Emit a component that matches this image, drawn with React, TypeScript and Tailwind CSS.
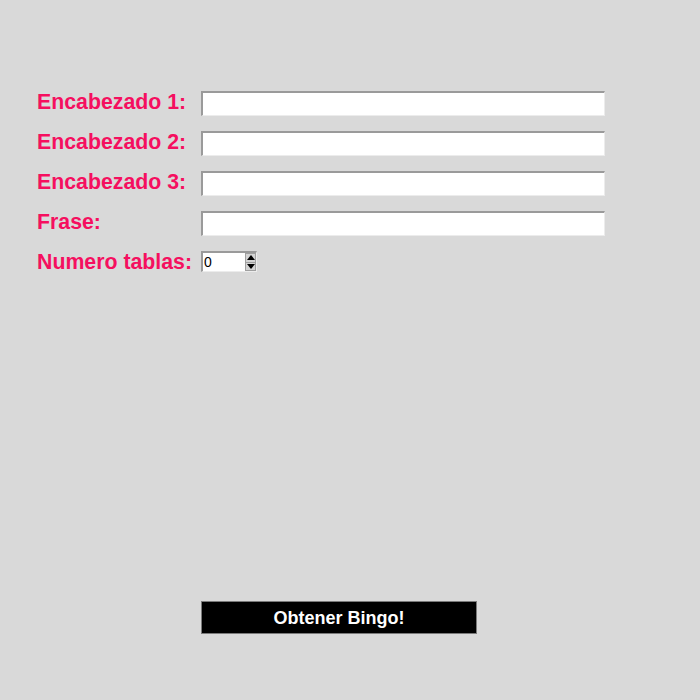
import React, { useState } from 'react'

const fields = ['Encabezado 1:', 'Encabezado 2:', 'Encabezado 3:', 'Frase:']

const TextRow = ({ label }: { label: string }) => (
  <div className="flex h-[40px] items-start">
    <label className="w-[164px] text-[21.3px] leading-[24px] font-bold text-[#f50f5f] mt-[-1px] whitespace-nowrap">
      {label}
    </label>
    <input
      type="text"
      className="h-[25px] w-[404px] bg-white border-t-2 border-l-2 border-b border-r border-t-[#9a9a9a] border-l-[#9a9a9a] border-b-[#ececec] border-r-[#ececec] outline-none px-1 text-[13px]"
    />
  </div>
)

export default function App() {
  const [tablas, setTablas] = useState(0)

  return (
    <div
      className="min-h-[700px] w-full bg-[#d9d9d9] pt-[91px] pl-[37px]"
      style={{ fontFamily: '"Liberation Sans", Arial, sans-serif' }}
    >
      {fields.map((f) => (
        <TextRow key={f} label={f} />
      ))}
      <div className="flex h-[40px] items-start">
        <label className="w-[164px] text-[21.3px] leading-[24px] font-bold text-[#f50f5f] mt-[-1px] whitespace-nowrap">
          Numero tablas:
        </label>
        <div className="flex h-[21px] w-[56px] bg-white border-t-2 border-l-2 border-t-[#9a9a9a] border-l-[#9a9a9a] border-b border-r border-b-[#ececec] border-r-[#ececec]">
          <input
            value={tablas}
            onChange={(e) => setTablas(Number(e.target.value) || 0)}
            className="w-[42px] h-full pl-[1px] text-[14px] leading-none outline-none bg-white text-black"
          />
          <div className="flex flex-col w-[11px] h-full">
            <button
              onClick={() => setTablas(tablas + 1)}
              className="flex-1 flex items-center justify-center bg-[#d4d4d4] border border-[#a0a0a0]"
            >
              <span className="block w-0 h-0 border-l-[4px] border-r-[4px] border-b-[5px] border-l-transparent border-r-transparent border-b-black" />
            </button>
            <button
              onClick={() => setTablas(Math.max(0, tablas - 1))}
              className="flex-1 flex items-center justify-center bg-[#d4d4d4] border border-t-0 border-[#a0a0a0]"
            >
              <span className="block w-0 h-0 border-l-[4px] border-r-[4px] border-t-[5px] border-l-transparent border-r-transparent border-t-black" />
            </button>
          </div>
        </div>
      </div>
      <div className="pl-[164px] pt-[310px]">
        <button className="h-[33px] w-[276px] bg-black border border-[#7a7a7a] text-white font-bold text-[18px] leading-none">
          Obtener Bingo!
        </button>
      </div>
    </div>
  )
}
